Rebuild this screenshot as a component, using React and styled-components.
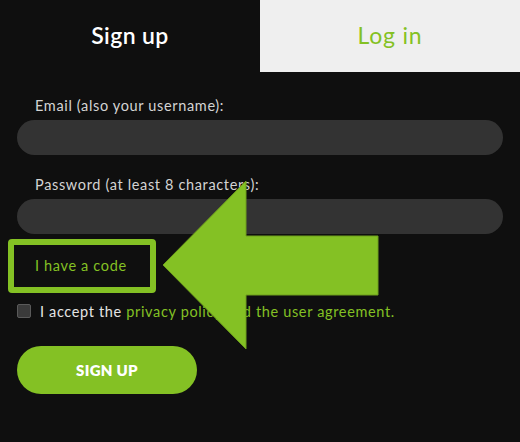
import React from "react";
import styled, { createGlobalStyle } from "styled-components";

const GlobalStyle = createGlobalStyle`
  html, body {
    margin: 0;
    padding: 0;
    background: #0f0f0f;
  }
  body {
    font-family: "Lato", "Open Sans", sans-serif;
  }
`;

const green = "#84c124";

const Page = styled.div`
  position: relative;
  width: 520px;
  height: 442px;
  background: #0f0f0f;
  overflow: hidden;
`;

const Tabs = styled.div`
  display: grid;
  grid-template-columns: 1fr 1fr;
  height: 72px;
`;

const Tab = styled.div`
  display: flex;
  align-items: center;
  justify-content: center;
  font-size: 23px;
  font-weight: ${(props) => (props.active ? 600 : 400)};
  color: ${(props) => (props.active ? "#ffffff" : green)};
  background: ${(props) => (props.active ? "transparent" : "#efefef")};
  letter-spacing: ${(props) => (props.active ? 0.4 : 0.8)}px;
  padding-bottom: 2px;
`;

const Form = styled.div`
  display: flex;
  flex-direction: column;
  padding: 24px 17px 0;
`;

const Field = styled.div`
  display: flex;
  flex-direction: column;
  gap: 4px;
  margin-bottom: ${(props) => props.gap || 0}px;
`;

const Label = styled.label`
  font-size: 14.5px;
  line-height: 20px;
  color: #d4d4d4;
  padding-left: 18px;
  letter-spacing: 0.65px;
`;

const Input = styled.div`
  height: 35px;
  border-radius: 18px;
  background: #333333;
`;

const CodeRow = styled.div`
  position: relative;
  margin-top: 21px;
  padding-left: 18px;
  height: 20px;
  line-height: 20px;
`;

const CodeLink = styled.span`
  font-size: 14.5px;
  color: ${green};
  letter-spacing: 0.65px;
`;

const Highlight = styled.div`
  position: absolute;
  left: -9px;
  top: -16px;
  width: 136px;
  height: 42px;
  border: 6px solid ${green};
  border-radius: 4px;
`;

const AgreeRow = styled.div`
  display: flex;
  align-items: center;
  gap: 9px;
  margin-top: 26px;
  height: 20px;
  font-size: 14.5px;
  color: #e4e4e4;
  letter-spacing: 0.65px;
`;

const Checkbox = styled.span`
  width: 12px;
  height: 12px;
  border: 1px solid #5a5a5a;
  border-radius: 2px;
  background: #3a3a3a;
`;

const Link = styled.span`
  color: ${green};
`;

const Button = styled.div`
  display: flex;
  align-items: center;
  justify-content: center;
  width: 180px;
  height: 48px;
  margin-top: 25px;
  border-radius: 24px;
  background: ${green};
  color: #ffffff;
  font-size: 15px;
  font-weight: 800;
  letter-spacing: 0.3px;
`;

const Arrow = styled.svg`
  position: absolute;
  left: 0;
  top: 0;
  pointer-events: none;
`;

export default function App() {
  return (
    <>
      <GlobalStyle />
      <Page>
        <Tabs>
          <Tab active>Sign up</Tab>
          <Tab>Log in</Tab>
        </Tabs>
        <Form>
          <Field gap={20}>
            <Label>Email (also your username):</Label>
            <Input />
          </Field>
          <Field>
            <Label>Password (at least 8 characters):</Label>
            <Input />
          </Field>
          <CodeRow>
            <Highlight />
            <CodeLink>I have a code</CodeLink>
          </CodeRow>
          <AgreeRow>
            <Checkbox />
            <span>
              I accept the <Link>privacy policy and the user agreement.</Link>
            </span>
          </AgreeRow>
          <Button>SIGN UP</Button>
        </Form>
        <Arrow width="520" height="442" viewBox="0 0 520 442">
          <polygon
            points="163,265 246,181 246,236 378,236 378,295 246,295 246,349"
            fill={green}
            stroke="#6f9f1c"
            strokeWidth="1"
          />
        </Arrow>
      </Page>
    </>
  );
}
